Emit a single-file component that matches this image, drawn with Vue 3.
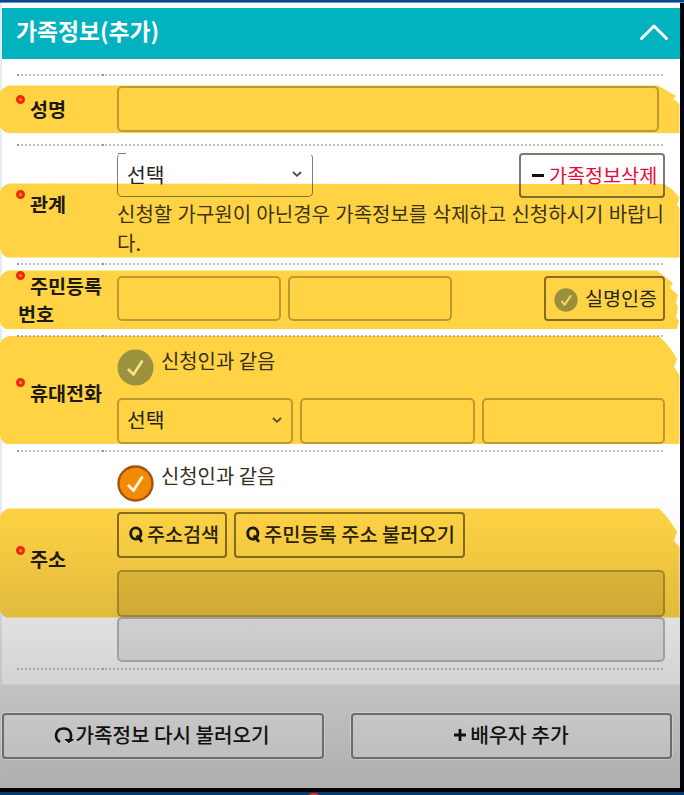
<script setup>
const highlights = [
  'M0 93 Q1 88 9 85.5 L658 85.5 L676 96 L673 99 L676 101 L679.5 104 V133 H7 Q1 130 0 126 Z',
  'M0 191 Q2 185 10 183.5 L664 184 L673 190 L679.5 198 L677 205 L679.5 208 V257.5 H7 Q0 254 0 247 Z',
  'M0 278 Q2 272 9 270.5 L657 270.5 L673 283 L670 288 L678 295 L676 302 L678 308 L676 317 L679 321 L677 329 H6 Q0 326 0 321 Z',
  'M0 343 Q2 338 9 336 L659 336 Q670 346 677 359 L674 367 L679.5 375 V444 H6 Q0 441 0 434 Z',
  'M0 517 Q2 510 9 508.5 L659 508.5 Q669 518 677 532 L674 541 L679.5 547 V617.5 H6 Q0 614 0 608 Z',
]
</script>

<template>
  <div class="screen">
    <div class="backdrop">
      <svg class="marks" width="684" height="795" viewBox="0 0 684 795">
        <path v-for="d in highlights" :key="d" :d="d" fill="#ffd344" />
      </svg>
      <div class="shade"></div>
    </div>

    <div class="topline"></div>
    <div class="body">
      <header class="title">
        <h1>가족정보(추가)</h1>
        <svg width="30" height="20" viewBox="0 0 30 20"><path d="M2.500 16.500 15 4 27.500 16.500" fill="none" stroke="#fff" stroke-width="3" stroke-linecap="round" stroke-linejoin="round" /></svg>
      </header>

      <main class="form">
        <section class="row name">
          <div class="label"><i class="dot"></i>성명</div>
          <div class="content"><div class="field"></div></div>
        </section>

        <section class="row relation">
          <div class="label"><i class="dot"></i>관계</div>
          <div class="content">
            <div class="line between">
              <div class="field select open">선택
                <svg width="12" height="8" viewBox="0 0 12 8"><path d="M2 2 6 5.800 10 2" /></svg>
              </div>
              <div class="btn danger"><b class="minus"></b>가족정보삭제</div>
            </div>
            <p class="note">신청할 가구원이 아닌경우 가족정보를 삭제하고 신청하시기 바랍니<br>다.</p>
          </div>
        </section>

        <section class="row resident">
          <div class="label"><i class="dot"></i>주민등록<br>번호</div>
          <div class="content">
            <div class="line">
              <div class="field"></div>
              <div class="field"></div>
              <div class="btn verify">
                <svg width="24" height="24" viewBox="0 0 36 36"><circle cx="18" cy="18" r="17.500" fill="#9b8e3c" /><path d="M11 19.500 16 25 25.500 11" fill="none" stroke="#f5d768" stroke-width="3" /></svg>
                실명인증
              </div>
            </div>
          </div>
        </section>

        <section class="row phone">
          <div class="label"><i class="dot"></i>휴대전화</div>
          <div class="content">
            <div class="same">
              <svg width="37" height="37" viewBox="0 0 37 37"><circle cx="18.500" cy="18.500" r="18" fill="#9b923f" /><path d="M11 20 16.500 25.500 25.500 11.500" fill="none" stroke="#ffe27d" stroke-width="2.600" /></svg>
              <span>신청인과 같음</span>
            </div>
            <div class="line">
              <div class="field select">선택
                <svg width="12" height="8" viewBox="0 0 12 8"><path d="M2 2 6 5.800 10 2" /></svg>
              </div>
              <div class="field"></div>
              <div class="field last"></div>
            </div>
          </div>
        </section>

        <section class="row address">
          <div class="label"><i class="dot"></i>주소</div>
          <div class="content">
            <div class="same">
              <svg width="37" height="37" viewBox="0 0 37 37"><circle cx="18.500" cy="18.500" r="17" fill="#f28a05" stroke="#a65312" stroke-width="2.400" /><path d="M11 20 16.500 25.500 25.500 11.500" fill="none" stroke="#fff6e0" stroke-width="2.800" /></svg>
              <span>신청인과 같음</span>
            </div>
            <div class="line">
              <div class="btn search">
                <svg width="15" height="17" viewBox="0 0 15 17"><ellipse cx="6.800" cy="7.500" rx="5.100" ry="5.600" /><path d="M7.800 9.500 13 15.800" /></svg>주소검색
              </div>
              <div class="btn search load">
                <svg width="15" height="17" viewBox="0 0 15 17"><ellipse cx="6.800" cy="7.500" rx="5.100" ry="5.600" /><path d="M7.800 9.500 13 15.800" /></svg>주민등록 주소 불러오기
              </div>
            </div>
            <div class="field filled"></div>
            <div class="field filled plain"></div>
          </div>
        </section>
        <div class="row end"></div>
      </main>

      <footer class="actions">
        <div class="btn big">
          <svg width="20" height="19" viewBox="0 0 20 19"><path d="M6 17C-.5 13 1.500 3.500 9.500 3.500S18 10.500 16 15.500" fill="none" stroke="#111" stroke-width="2.600" /><path d="M11 14.500H19.500L15 17.500Z" fill="#111" stroke="#111" stroke-width="1" /></svg>가족정보 다시 불러오기
        </div>
        <div class="btn big add">
          <svg width="12" height="12" viewBox="0 0 12 12"><path d="M6 0V12M0 6H12" stroke="#111" stroke-width="2.800" /></svg>배우자 추가
        </div>
      </footer>
    </div>
    <div class="bottomline"><i class="knob"></i></div>
  </div>
</template>

<style>
body { margin: 0; background: #fff; }
</style>

<style scoped>
* { box-sizing: border-box; }
.screen {
  position: relative;
  isolation: isolate;
  width: 684px;
  height: 795px;
  overflow: hidden;
  font-family: "Noto Sans CJK KR", "Noto Sans", sans-serif;
  font-size: 19.6px;
  color: #25231d;
}
.backdrop {
  position: absolute;
  inset: 0;
  z-index: -1;
  background: linear-gradient(#fff 684px, #ebebeb 685px);
}
.backdrop::before {
  content: "";
  position: absolute;
  left: 0;
  top: 0;
  width: 2px;
  height: 100%;
  background: #e6edf6;
}
.marks { position: absolute; left: 0; top: 0; }
.shade {
  position: absolute;
  inset: 0;
  background: linear-gradient(transparent 490px, rgba(0, 0, 0, .025) 530px, rgba(0, 0, 0, .12) 620px, rgba(0, 0, 0, .17) 680px, rgba(0, 0, 0, .26) 790px);
}
.topline { height: 3px; background: #07478f; border-bottom: 1px solid #6f93bd; }
.body {
  height: 785px;
  padding: 5px 0 0 2px;
  border-right: 4px solid #02040c;
}
.title {
  display: flex;
  align-items: center;
  justify-content: space-between;
  width: 678px;
  height: 51px;
  padding: 0 11px 0 14px;
  background: #02b2bf;
}
.title h1 {
  margin: 0 0 6px;
  font-size: 22.8px;
  line-height: 32px;
  font-weight: 700;
  color: #fff;
}
.title svg { margin-top: -4px; }
.form { margin-top: 16px; padding: 0 13px 0 15px; }
.row {
  position: relative;
  display: grid;
  grid-template-columns: 100px 548px;
  width: 648px;
}
.row::before {
  content: "";
  position: absolute;
  left: 0;
  top: -1px;
  width: 648px;
  height: 2px;
  background:
    linear-gradient(90deg, #9a9a9a 2px, transparent 2px 85px, #9a9a9a 85px 87px, transparent 87px),
    repeating-linear-gradient(90deg, rgba(90, 95, 115, .4) 0 2px, transparent 2px 4px);
}
.name { height: 70px; }
.relation { height: 119px; }
.resident { height: 72px; }
.phone { height: 115px; }
.address { height: 218px; }
.end { height: 15px; }

.label {
  position: relative;
  padding-left: 1px;
  font-weight: 700;
  line-height: 28px;
  text-indent: 12px;
  color: #1d1a10;
}
.dot {
  position: absolute;
  left: -1px;
  width: 9px;
  height: 9px;
  border: 3px solid #f02a08;
  border-radius: 50%;
  background: #ff8a4a;
}
.name .label { padding-top: 20px; }
.relation .label { padding-top: 45px; }
.resident .label { padding-top: 8px; }
.resident .dot { margin-top: -1px; }
.phone .label { padding-top: 43px; }
.phone .dot { margin-top: -1px; }
.address .label { padding-top: 94px; }
.address .dot { margin-top: 1px; }

.content { display: flex; flex-direction: column; }
.line { display: flex; gap: 7px; }
.between { justify-content: space-between; }
.field {
  height: 45px;
  border: 2px solid rgba(90, 70, 20, .4);
  border-radius: 5px;
}
.name .field { margin-top: 11px; width: 542px; height: 46px; }
.select {
  display: flex;
  align-items: center;
  justify-content: space-between;
  padding: 0 8px 3px;
  font-size: 20.4px;
  line-height: 29px;
}
.select svg { fill: none; stroke: #514a35; stroke-width: 1.8; }
.select.open { width: 196px; height: 44px; border-color: rgba(60, 55, 40, .65); border-top-color: transparent; border-width: 1.500px; padding: 0 9px 2px; position: relative; }
.select.open::before {
  content: "";
  position: absolute;
  left: 0;
  top: -1px;
  width: 8px;
  height: 1px;
  background: #777;
}
.btn {
  display: flex;
  align-items: center;
  height: 45px;
  padding-bottom: 3px;
  border: 2px solid rgba(60, 45, 10, .62);
  border-radius: 4px;
  line-height: 29px;
  white-space: nowrap;
}
.relation .line { height: 53px; padding-top: 8px; }
.danger { width: 146px; padding-left: 11px; color: #e8083a; border-color: rgba(60, 50, 30, .65); }
.minus { width: 12px; height: 3px; margin: 3px 5px 0 0; background: #111; }
.note {
  margin: 1px 0 0;
  font-size: 20px;
  line-height: 29px;
  word-spacing: 0.8px;
  white-space: nowrap;
  color: #3b3317;
}
.resident .line { padding-top: 12px; }
.resident .field { width: 164px; }
.verify { width: 121px; margin-left: auto; padding-left: 8px; gap: 7px; }
.verify svg { margin-top: 5px; }

.same { display: flex; gap: 7px; height: 49px; margin-top: 13px; font-size: 19.9px; line-height: 28px; color: #352f1e; }
.same span { margin-top: -2px; }
.phone .field { width: 176px; height: 46px; }
.phone .field.last { width: 183px; }
.address .same { height: 47px; margin-top: 14px; }
.address .same span { margin-top: -3px; }
.search { width: 110px; height: 46px; padding-left: 10px; gap: 3px; color: #29230e; font-weight: 500; }
.search.load { width: 231px; font-size: 19.8px; padding-left: 10px; }
.search svg { fill: none; stroke: #1c180b; stroke-width: 2.900; margin-top: 1px; }
.filled { margin-top: 12px; height: 47px; background: rgba(60, 40, 0, .11); }
.filled.plain { margin-top: 0; height: 45px; border-color: #a0a0a0; background: rgba(0, 0, 0, .075); }

.actions { display: flex; gap: 27px; margin-top: 29px; }
.big {
  justify-content: center;
  width: 322px;
  height: 46px;
  padding-right: 3px;
  border-color: #6c6c6c;
  background: rgba(255, 255, 255, .15);
  box-shadow: 0 0 0 1px rgba(255, 255, 255, .25);
  color: #111;
  font-size: 20.1px;
  font-weight: 500;
  gap: 2px;
}
.big.add { width: 321px; padding-right: 0; font-size: 20.4px; gap: 4px; }
.bottomline { position: relative; height: 7px; border-top: 4px solid #000; background: #083a75; }
.knob {
  position: absolute;
  left: 304px;
  top: 1px;
  width: 20px;
  height: 20px;
  border-radius: 50%;
  background: #e8322f;
}
</style>
